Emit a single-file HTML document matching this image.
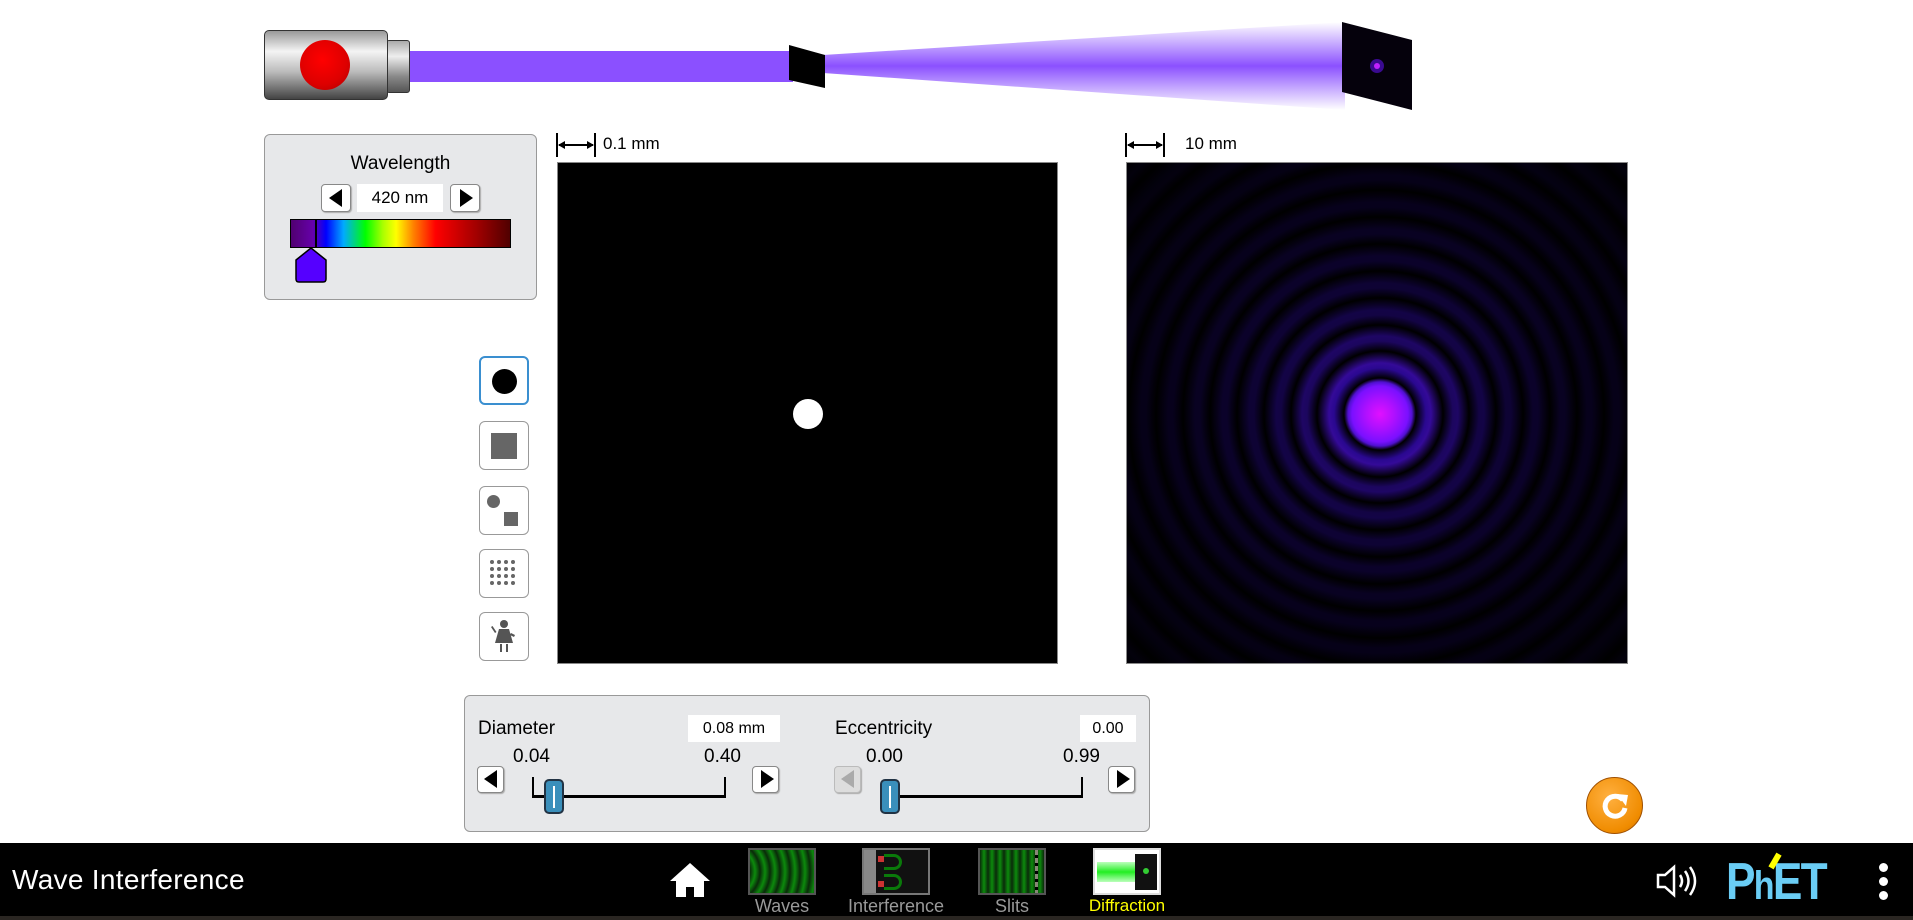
<!DOCTYPE html>
<html><head><style>
*{margin:0;padding:0;box-sizing:border-box}
body{width:1913px;height:920px;background:#fff;position:relative;overflow:hidden;font-family:"Liberation Sans",sans-serif;color:#000}
.a{position:absolute}
.btn{position:absolute;background:#fff;border:1px solid #888;border-radius:4px;box-shadow:1px 1px 1px #aaa}
.tri-l{width:0;height:0;border-top:9px solid transparent;border-bottom:9px solid transparent;border-right:13px solid #000;position:absolute}
.tri-r{width:0;height:0;border-top:9px solid transparent;border-bottom:9px solid transparent;border-left:13px solid #000;position:absolute}
.shape{position:absolute;left:479px;width:50px;height:49px;background:#fff;border:1px solid #999;border-radius:6px}
.thumb{position:absolute;width:20px;height:35px;background:#3a8fbb;border:2px solid #234;border-radius:5px}
.thumb:after{content:"";position:absolute;left:7px;top:5px;width:2px;height:22px;background:#fff}
.tab{position:absolute;top:848px;width:68px;height:47px;border:2px solid #555}
.lbl{position:absolute;top:896px;font-size:18px;color:#999;text-align:center}
</style></head><body>
<!-- laser -->
<div class="a" style="left:386px;top:40px;width:24px;height:53px;border:1px solid #333;border-radius:3px;background:linear-gradient(#aaa,#eee 30%,#888 70%,#555)"></div>
<div class="a" style="left:264px;top:30px;width:124px;height:70px;border:1px solid #333;border-radius:5px;background:linear-gradient(#999,#f4f4f4 30%,#bbb 60%,#444)"></div>
<div class="a" style="left:300px;top:40px;width:50px;height:50px;border-radius:50%;background:radial-gradient(circle at 45% 40%,#f00,#d00 60%,#a00)"></div>
<div class="a" style="left:410px;top:51px;width:383px;height:31px;background:#8b50ff"></div>
<svg class="a" style="left:0;top:0" width="1913" height="120">
<defs><linearGradient id="cg" x1="0" y1="0" x2="0" y2="1"><stop offset="0" stop-color="#fff"/><stop offset=".5" stop-color="#8b50ff"/><stop offset="1" stop-color="#fff"/></linearGradient></defs>
<polygon points="823,55 1345,22 1345,110 823,73" fill="url(#cg)"/>
<polygon points="789,45 825,55 825,88 789,80" fill="#000"/>
<polygon points="1342,22 1412,40 1412,110 1342,92" fill="#05010c"/>
<circle cx="1377" cy="66" r="7" fill="#3a0a90"/><circle cx="1377" cy="66" r="3" fill="#c020ff"/>
</svg>
<!-- wavelength panel -->
<div class="a" style="left:264px;top:134px;width:273px;height:166px;background:#e7e8ea;border:1px solid #999;border-radius:6px"></div>
<div class="a" style="left:264px;top:153px;width:273px;text-align:center;font-size:19px">Wavelength</div>
<div class="btn" style="left:321px;top:184px;width:30px;height:28px"><div class="tri-l" style="left:7px;top:4px"></div></div>
<div class="a" style="left:357px;top:184px;width:86px;height:28px;background:#fff;text-align:center;font-size:17px;line-height:28px">420 nm</div>
<div class="btn" style="left:450px;top:184px;width:30px;height:28px"><div class="tri-r" style="left:9px;top:4px"></div></div>
<div class="a" style="left:290px;top:219px;width:221px;height:29px;border:1px solid #000;background:linear-gradient(90deg,#500070,#6600aa 10%,#0000ff 16%,#00aaff 24%,#00ff00 34%,#aaff00 42%,#ffff00 48%,#ff8000 56%,#ff0000 66%,#a00000 85%,#500000)"></div>
<div class="a" style="left:315px;top:219px;width:2px;height:29px;background:#000"></div>
<svg class="a" style="left:294px;top:246px" width="40" height="38"><path d="M2 14 L17 2 L32 14 L32 33 Q32 36 29 36 L5 36 Q2 36 2 33Z" fill="#5500ff" stroke="#000" stroke-width="1.5"/></svg>
<!-- scales -->
<svg class="a" style="left:555px;top:132px" width="50" height="26"><path d="M2 1V25M40 1V25M4 13H38" stroke="#000" stroke-width="2"/><path d="M3 13l7-4v8zM39 13l-7-4v8z" fill="#000"/></svg>
<div class="a" style="left:603px;top:134px;font-size:17px">0.1 mm</div>
<svg class="a" style="left:1124px;top:132px" width="50" height="26"><path d="M2 1V25M40 1V25M4 13H38" stroke="#000" stroke-width="2"/><path d="M3 13l7-4v8zM39 13l-7-4v8z" fill="#000"/></svg>
<div class="a" style="left:1185px;top:134px;font-size:17px">10 mm</div>
<!-- aperture -->
<div class="a" style="left:557px;top:162px;width:501px;height:502px;background:#000;border:1px solid #888"></div>
<div class="a" style="left:793px;top:399px;width:30px;height:30px;border-radius:50%;background:#fff"></div>
<!-- pattern -->
<div class="a" style="left:1126px;top:162px;width:502px;height:502px;border:1px solid #888;background:radial-gradient(circle at 253px 251px,#e010ff 0,#b010ff 14px,#7a10ff 28px,#5010d0 32px,#000 36px,#2a0890 46px,#340a98 51px,#000 63px,#1c065e 73px,#1e0664 78px,#000 89px,#130444 99px,#130446 104px,#000 116px,#0e0334 126px,#0e0334 131px,#000 143px,#0b022a 153px,#0b022a 158px,#000 170px,#090222 180px,#090222 185px,#000 197px,#07011c 207px,#07011c 212px,#000 224px,#060118 234px,#060118 239px,#000 251px,#050114 261px,#050114 266px,#000 278px,#040112 288px,#040110 293px,#000 306px,#04010f 316px,#03010d 321px,#000 334px,#03010c 345px,#000 360px)"></div>
<!-- shape buttons -->
<div class="shape" style="top:356px;border:2px solid #3a8fd0"><div class="a" style="left:11px;top:11px;width:25px;height:25px;border-radius:50%;background:#000"></div></div>
<div class="shape" style="top:421px"><div class="a" style="left:11px;top:11px;width:26px;height:26px;background:#666"></div></div>
<div class="shape" style="top:486px"><div class="a" style="left:7px;top:8px;width:13px;height:13px;border-radius:50%;background:#666"></div><div class="a" style="left:24px;top:25px;width:14px;height:14px;background:#666"></div></div>
<div class="shape" style="top:549px"><svg width="48" height="47"><g fill="#666"><circle cx="12" cy="12" r="2"/><circle cx="19" cy="12" r="2"/><circle cx="26" cy="12" r="2"/><circle cx="33" cy="12" r="2"/><circle cx="12" cy="19" r="2"/><circle cx="19" cy="19" r="2"/><circle cx="26" cy="19" r="2"/><circle cx="33" cy="19" r="2"/><circle cx="12" cy="26" r="2"/><circle cx="19" cy="26" r="2"/><circle cx="26" cy="26" r="2"/><circle cx="33" cy="26" r="2"/><circle cx="12" cy="33" r="2"/><circle cx="19" cy="33" r="2"/><circle cx="26" cy="33" r="2"/><circle cx="33" cy="33" r="2"/></g></svg></div>
<div class="shape" style="top:612px"><svg width="48" height="47"><g fill="#555"><circle cx="24" cy="11" r="4"/><path d="M19 16h10l4 14H15z"/><rect x="20" y="31" width="2" height="8"/><rect x="26" y="31" width="2" height="8"/><path d="M15 20l-4-6 1.5-1 4 6zM31 20l4 2-1 2-4-2z"/></g></svg></div>
<!-- bottom panel -->
<div class="a" style="left:464px;top:695px;width:686px;height:137px;background:#e7e8ea;border:1px solid #999;border-radius:6px"></div>
<div class="a" style="left:478px;top:718px;font-size:19px">Diameter</div>
<div class="a" style="left:688px;top:715px;width:92px;height:27px;background:#fff;font-size:16px;text-align:center;line-height:27px">0.08 mm</div>
<div class="a" style="left:513px;top:746px;font-size:19px">0.04</div>
<div class="a" style="left:704px;top:746px;font-size:19px">0.40</div>
<div class="btn" style="left:477px;top:766px;width:27px;height:27px"><div class="tri-l" style="left:6px;top:3px"></div></div>
<div class="btn" style="left:752px;top:766px;width:27px;height:27px"><div class="tri-r" style="left:8px;top:3px"></div></div>
<div class="a" style="left:532px;top:777px;width:2px;height:21px;background:#000"></div>
<div class="a" style="left:724px;top:777px;width:2px;height:21px;background:#000"></div>
<div class="a" style="left:532px;top:795px;width:194px;height:3px;background:#000"></div>
<div class="thumb" style="left:544px;top:779px"></div>
<div class="a" style="left:835px;top:718px;font-size:19px">Eccentricity</div>
<div class="a" style="left:1080px;top:715px;width:56px;height:27px;background:#fff;font-size:16px;text-align:center;line-height:27px">0.00</div>
<div class="a" style="left:866px;top:746px;font-size:19px">0.00</div>
<div class="a" style="left:1063px;top:746px;font-size:19px">0.99</div>
<div class="btn" style="left:834px;top:766px;width:27px;height:27px;border-color:#bbb;background:#ddd"><div class="tri-l" style="left:6px;top:3px;border-right-color:#aaa"></div></div>
<div class="btn" style="left:1108px;top:766px;width:27px;height:27px"><div class="tri-r" style="left:8px;top:3px"></div></div>
<div class="a" style="left:880px;top:795px;width:203px;height:3px;background:#000"></div>
<div class="a" style="left:1081px;top:777px;width:2px;height:21px;background:#000"></div>
<div class="thumb" style="left:880px;top:779px"></div>
<!-- reset -->
<div class="a" style="left:1586px;top:777px;width:57px;height:57px;border-radius:50%;background:radial-gradient(circle at 40% 35%,#ffb040,#f08c00 70%,#c86a00);border:1px solid #a05000"></div>
<svg class="a" style="left:1596px;top:787px" width="38" height="38"><path d="M27 13A10 10 0 1 0 29 21" fill="none" stroke="#fff" stroke-width="5"/><path d="M21 7L32 8L30 19Z" fill="#fff"/></svg>
<!-- nav -->
<div class="a" style="left:0;top:843px;width:1913px;height:73px;background:#000"></div>
<div class="a" style="left:0;top:916px;width:1913px;height:4px;background:#2a2622"></div>
<div class="a" style="left:12px;top:864px;font-size:28px;color:#fff;letter-spacing:0.3px">Wave Interference</div>
<svg class="a" style="left:668px;top:860px" width="44" height="38"><path d="M22 3L2 21h6v16h10v-10h8v10h10V21h6z" fill="#fff"/></svg>
<div class="tab" style="left:748px;background:repeating-radial-gradient(circle at -20px 50%,#0a2a0a 0,#0c8a0c 5px,#0a2a0a 10px)"></div>
<div class="lbl" style="left:748px;width:68px">Waves</div>
<div class="tab" style="left:862px;background:#111;border-color:#777"><div class="a" style="left:0;top:0;width:12px;height:43px;background:#888"></div><div class="a" style="left:14px;top:6px;width:6px;height:6px;background:#c33"></div><div class="a" style="left:14px;top:31px;width:6px;height:6px;background:#c33"></div><div class="a" style="left:20px;top:4px;width:18px;height:16px;border:3px solid #0a7a0a;border-left:none;border-radius:0 10px 10px 0"></div><div class="a" style="left:20px;top:24px;width:18px;height:16px;border:3px solid #0a7a0a;border-left:none;border-radius:0 10px 10px 0"></div></div>
<div class="lbl" style="left:840px;width:112px">Interference</div>
<div class="tab" style="left:978px;background:repeating-linear-gradient(90deg,#0a2a0a 0,#0c8a0c 4px,#0a2a0a 8px)"><div class="a" style="right:6px;top:0;width:3px;height:43px;background:repeating-linear-gradient(#887 0,#887 5px,#000 5px,#000 8px)"></div></div>
<div class="lbl" style="left:978px;width:68px">Slits</div>
<div class="tab" style="left:1093px;background:#fff;border-color:#ddd"><div class="a" style="left:2px;top:12px;width:40px;height:20px;background:linear-gradient(#bfb,#2e2,#bfb)"></div><div class="a" style="left:40px;top:4px;width:22px;height:36px;background:#111"></div><div class="a" style="left:48px;top:18px;width:6px;height:6px;border-radius:50%;background:#3c3"></div></div>
<div class="lbl" style="left:1080px;width:94px;color:#ff0;font-size:17px">Diffraction</div>
<svg class="a" style="left:1655px;top:862px" width="44" height="38"><path d="M3 13h7l9-8v28l-9-8H3z" fill="none" stroke="#fff" stroke-width="2.5"/><path d="M25 13q4 6 0 12M30 9q7 10 0 20M35 5q10 14 0 28" fill="none" stroke="#fff" stroke-width="2.5"/></svg>
<div class="a" style="left:1726px;top:852px;font-size:52px;font-weight:bold;color:#6acdf5;letter-spacing:-2px;line-height:60px;transform:scaleX(0.85);transform-origin:left">P<span style="font-size:40px">h</span><span style="color:#6acdf5">ET</span></div>
<div class="a" style="left:1772px;top:853px;width:6px;height:16px;background:#ff0;transform:rotate(30deg)"></div>
<div class="a" style="left:1879px;top:863px;width:9px;height:9px;border-radius:50%;background:#fff"></div>
<div class="a" style="left:1879px;top:877px;width:9px;height:9px;border-radius:50%;background:#fff"></div>
<div class="a" style="left:1879px;top:891px;width:9px;height:9px;border-radius:50%;background:#fff"></div>
</body></html>
